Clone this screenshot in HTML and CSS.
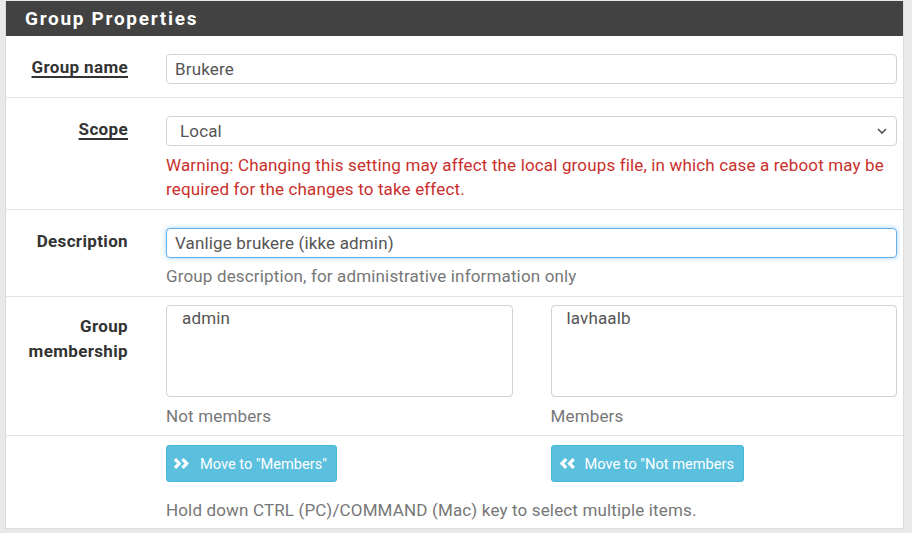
FILE: index.html
```
<!DOCTYPE html>
<html>
<head>
<meta charset="utf-8">
<link rel="stylesheet" href="styles.css">
</head>
<body>
<div class="panel">
  <div class="panel-heading"><h2 class="panel-title">Group Properties</h2></div>
  <div class="panel-body">
    <div class="row row-name">
      <div class="label"><span class="req">Group name</span></div>
      <div class="field"><div class="input">Brukere</div></div>
    </div>
    <div class="row row-scope">
      <div class="label"><span class="req">Scope</span></div>
      <div class="field">
        <div class="input select"><span>Local</span>
          <svg class="caret" width="12" height="8" viewBox="0 0 12 8"><path d="M2 2 L6 6 L10 2" fill="none" stroke="#555" stroke-width="1.6"/></svg>
        </div>
        <p class="warning">Warning: Changing this setting may affect the local groups file, in which case a reboot may be required for the changes to take effect.</p>
      </div>
    </div>
    <div class="row row-desc">
      <div class="label"><span>Description</span></div>
      <div class="field">
        <div class="input focus">Vanlige brukere (ikke admin)</div>
        <p class="help">Group description, for administrative information only</p>
      </div>
    </div>
    <div class="row row-members">
      <div class="label label-top"><span>Group<br>membership</span></div>
      <div class="field two">
        <div class="col">
          <div class="listbox"><div class="opt">admin</div></div>
          <p class="help">Not members</p>
        </div>
        <div class="col">
          <div class="listbox"><div class="opt">lavhaalb</div></div>
          <p class="help">Members</p>
        </div>
      </div>
    </div>
    <div class="row row-buttons">
      <div class="label"></div>
      <div class="field">
        <div class="two">
          <div class="col">
            <button class="btn"><svg width="18" height="11" viewBox="0 0 18 11"><path d="M2 1.2 L6.2 5.5 L2 9.8 M9.5 1.2 L13.7 5.5 L9.5 9.8" fill="none" stroke="#fff" stroke-width="3.2"/></svg>Move to "Members"</button>
          </div>
          <div class="col">
            <button class="btn"><svg width="18" height="11" viewBox="0 0 18 11"><path d="M8.2 1.2 L4 5.5 L8.2 9.8 M15.7 1.2 L11.5 5.5 L15.7 9.8" fill="none" stroke="#fff" stroke-width="3.2"/></svg>Move to "Not members</button>
          </div>
        </div>
        <p class="help help-last">Hold down CTRL (PC)/COMMAND (Mac) key to select multiple items.</p>
      </div>
    </div>
  </div>
</div>
</body>
</html>
```
FILE: styles.css
```
* { box-sizing: border-box; }
html, body { margin: 0; padding: 0; }
body {
  background: #e9e9e9;
  font-family: Roboto, "Liberation Sans", sans-serif;
  font-size: 17px;
  letter-spacing: 0.15px;
  color: #333;
  width: 912px;
  height: 533px;
  overflow: hidden;
}
.panel {
  margin: 1px 0 0 5px;
  width: 899px;
  background: #fff;
  border: 1px solid #dcdcdc;
  border-top: none;
}
.panel-heading {
  background: #424242;
  height: 35px;
  display: flex;
  align-items: center;
  padding-left: 19px;
}
.panel-title {
  margin: 0;
  color: #fff;
  font-size: 19px;
  font-weight: 700;
  letter-spacing: 1.7px;
}
.row {
  display: grid;
  grid-template-columns: 122px 1fr;
  column-gap: 38px;
  border-bottom: 1px solid #e4e4e4;
  padding-right: 6px;
}
.row:last-child { border-bottom: none; }
.label {
  text-align: right;
  font-weight: 700;
  color: #333;
  line-height: 24px;
  letter-spacing: 0.35px;
  padding-top: 1px;
}
.req {
  text-decoration: underline;
  text-underline-offset: 3px;
  text-decoration-thickness: 1.5px;
}
.input {
  height: 30px;
  border: 1px solid #d2d2d2;
  border-radius: 4px;
  padding: 0 8px;
  display: flex;
  align-items: center;
  color: #555;
  background: #fff;
}
.select { padding-left: 13px; justify-content: space-between; padding-right: 8px; }
.focus {
  border-color: #66afe9;
  box-shadow: 0 0 5px rgba(102, 175, 233, 0.6);
}
.warning {
  margin: 7px 0 0;
  color: #c9302c;
  line-height: 24px;
}
.help {
  margin: 6px 0 0;
  color: #777;
  line-height: 24px;
}
.row-name { padding-top: 18px; padding-bottom: 13px; }
.row-scope { padding-top: 18px; padding-bottom: 8px; }
.row-desc { padding-top: 18px; padding-bottom: 8px; }
.row-members { padding-top: 8px; padding-bottom: 7px; }
.row-members .label-top { padding-top: 9px; line-height: 25px; }
.row-members .help { margin-top: 7px; }
.two {
  display: grid;
  grid-template-columns: 1fr 1fr;
  column-gap: 38px;
}
.listbox {
  height: 92px;
  border: 1px solid #d2d2d2;
  border-radius: 4px;
  padding: 1px 15px;
  color: #555;
  line-height: 22px;
}
.row-buttons { padding-top: 9px; padding-bottom: 6px; }
.btn {
  font-family: inherit;
  font-size: 14.6px;
  letter-spacing: 0;
  color: #fff;
  background: #5bc0de;
  border: 1px solid #46b8da;
  border-radius: 3px;
  height: 37px;
  padding: 0 9px 0 6px;
  display: inline-flex;
  align-items: center;
  gap: 9px;
}
.btn svg { display: block; }
.row-buttons .help-last { margin-top: 16px; }
```
